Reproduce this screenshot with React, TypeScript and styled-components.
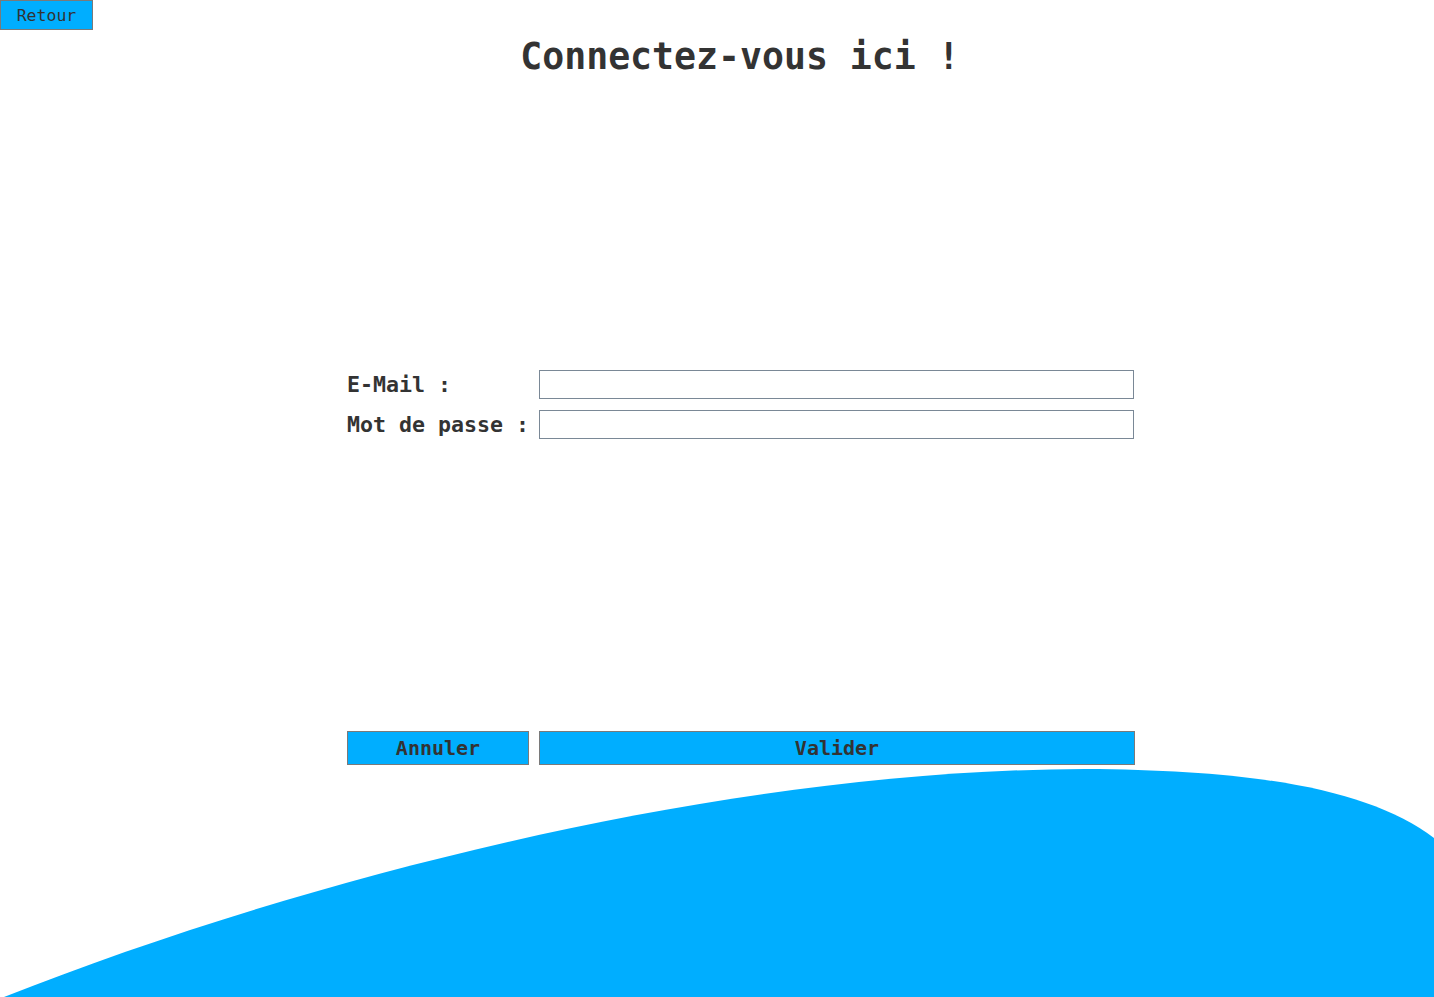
import React from "react";
import styled, { createGlobalStyle } from "styled-components";

const Global = createGlobalStyle`
  html, body { margin: 0; padding: 0; background: #ffffff; }
  body { font-family: "DejaVu Sans Mono", "Liberation Mono", monospace; color: #333333; }
`;

const Page = styled.div`
  position: relative;
  height: 997px;
  width: 1434px;
  overflow: hidden;
  display: flex;
  flex-direction: column;
`;

const BackButton = styled.button`
  align-self: flex-start;
  width: 93px;
  height: 30px;
  margin: 0;
  padding: 0;
  background: #00aeff;
  border: 1px solid #7a7a7a;
  font-family: "DejaVu Sans Mono", monospace;
  font-size: 16.5px;
  color: #333333;
  display: flex;
  align-items: center;
  justify-content: center;
`;

const Title = styled.h1`
  margin: 6px 0 0 0;
  padding-left: 46px;
  text-align: center;
  font-family: "DejaVu Sans Mono", monospace;
  font-weight: bold;
  font-size: 36.5px;
  line-height: 42px;
  color: #333333;
`;

const Form = styled.form`
  margin: 292px 0 0 347px;
  width: 788px;
  display: grid;
  grid-template-columns: 182px 596px;
  column-gap: 10px;
  row-gap: 11px;
  align-items: center;
`;

const Label = styled.label`
  font-family: "DejaVu Sans Mono", monospace;
  font-weight: bold;
  font-size: 21.6px;
  color: #333333;
  white-space: nowrap;
  line-height: 29px;
`;

const Input = styled.input`
  box-sizing: border-box;
  width: 595px;
  height: 29px;
  margin: 0;
  padding: 0 1px;
  border: 1px solid #7a8896;
  background: #ffffff;
  font-family: "DejaVu Sans Mono", monospace;
  font-size: 16px;
  outline: none;
  caret-color: #222;
`;

const Actions = styled.div`
  margin: 292px 0 0 347px;
  display: grid;
  grid-template-columns: 182px 596px;
  column-gap: 10px;
`;

const ActionButton = styled.button`
  box-sizing: border-box;
  height: 34px;
  margin: 0;
  padding: 0;
  background: #00aeff;
  border: 1px solid #7a7a7a;
  font-family: "DejaVu Sans Mono", monospace;
  font-weight: bold;
  font-size: 20px;
  color: #333333;
`;

const Wave = styled.svg`
  display: block;
  margin-top: auto;
  width: 1434px;
  height: 228px;
`;

export default function App() {
  return (
    <>
      <Global />
      <Page>
        <BackButton type="button">Retour</BackButton>
        <Title>Connectez-vous ici !</Title>
        <Form onSubmit={(e) => e.preventDefault()}>
          <Label htmlFor="email">E-Mail :</Label>
          <Input id="email" type="email" autoFocus />
          <Label htmlFor="pwd">Mot de passe :</Label>
          <Input id="pwd" type="password" />
        </Form>
        <Actions>
          <ActionButton type="button">Annuler</ActionButton>
          <ActionButton type="button">Valider</ActionButton>
        </Actions>
        <Wave viewBox="0 769 1434 228" preserveAspectRatio="none">
          <path
            d="M4 997 C 300 880 720 770 1085 769 C 1260 770 1370 790 1434 838 L 1434 997 Z"
            fill="#00aeff"
          />
        </Wave>
      </Page>
    </>
  );
}
